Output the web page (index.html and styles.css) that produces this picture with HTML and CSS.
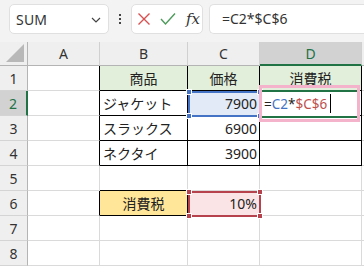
FILE: index.html
```html
<!DOCTYPE html>
<html lang="ja">
<head>
<meta charset="utf-8">
<link rel="stylesheet" href="styles.css">
</head>
<body>
<div class="app">
  <div class="toolbar">
    <div class="namebox">
      <span class="name">SUM</span>
      <svg class="chev" width="10" height="6" viewBox="0 0 10 6"><path d="M1 1 L5 5 L9 1" fill="none" stroke="#444" stroke-width="1.2"/></svg>
    </div>
    <div class="dots"><i></i><i></i><i></i></div>
    <div class="fbtns">
      <svg width="14" height="14" viewBox="0 0 14 14"><path d="M1.5 1.5 L12.5 12.5 M12.5 1.5 L1.5 12.5" stroke="#d8504f" stroke-width="1.4" fill="none"/></svg>
      <svg width="16" height="14" viewBox="0 0 16 14"><path d="M1 7 L5.5 12 L15 1.5" stroke="#4c9a5a" stroke-width="1.4" fill="none"/></svg>
      <span class="fx">fx</span>
    </div>
    <div class="finput">=C2*$C$6</div>
  </div>
  <div class="sheet">
    <div class="hd corner"><svg width="20" height="20" viewBox="0 0 20 20"><path d="M19 1 L19 19 L1 19 Z" fill="#b8b8b8"/></svg></div>
    <div class="hd col">A</div>
    <div class="hd col">B</div>
    <div class="hd col">C</div>
    <div class="hd col sel">D</div>
    <div class="hd col end"></div>

    <div class="hd row">1</div>
    <div class="c tl"></div>
    <div class="c t hdr ctr">商品</div>
    <div class="c t hdr ctr">価格</div>
    <div class="c t hdr ctr">消費税</div>
    <div class="c"></div>

    <div class="hd row rsel">2</div>
    <div class="c tl"></div>
    <div class="c t">ジャケット</div>
    <div class="c t num bluefill">7900</div>
    <div class="c t"></div>
    <div class="c"></div>

    <div class="hd row">3</div>
    <div class="c tl"></div>
    <div class="c t">スラックス</div>
    <div class="c t num">6900</div>
    <div class="c t"></div>
    <div class="c"></div>

    <div class="hd row">4</div>
    <div class="c tl"></div>
    <div class="c t">ネクタイ</div>
    <div class="c t num">3900</div>
    <div class="c t"></div>
    <div class="c"></div>

    <div class="hd row">5</div>
    <div class="c"></div>
    <div class="c tb"></div>
    <div class="c"></div>
    <div class="c"></div>
    <div class="c"></div>

    <div class="hd row">6</div>
    <div class="c tl"></div>
    <div class="c t yel ctr">消費税</div>
    <div class="c num pinkfill">10%</div>
    <div class="c"></div>
    <div class="c"></div>

    <div class="hd row">7</div>
    <div class="c"></div>
    <div class="c"></div>
    <div class="c"></div>
    <div class="c"></div>
    <div class="c"></div>

    <div class="hd row">8</div>
    <div class="c"></div>
    <div class="c"></div>
    <div class="c"></div>
    <div class="c"></div>
    <div class="c"></div>

    <div class="selbox blue">
      <i class="h h1"></i><i class="h h2"></i><i class="h h3"></i><i class="h h4"></i>
    </div>
    <div class="selbox red">
      <i class="h h1"></i><i class="h h2"></i><i class="h h3"></i><i class="h h4"></i>
    </div>
    <div class="editor">
      <div class="editcell"><span class="k">=</span><span class="b">C2</span><span class="k">*</span><span class="r">$C$6</span><span class="caret"></span></div>
    </div>
  </div>
</div>
</body>
</html>
```
FILE: styles.css
```css
* { box-sizing: border-box; }
html, body { margin: 0; padding: 0; }
body {
  width: 364px; height: 266px; overflow: hidden;
  background: #f3f3f3;
  font-family: "Noto Sans", "Noto Sans CJK JP", sans-serif;
  color: #222;
}
.app { width: 364px; height: 266px; overflow: hidden; }
.toolbar {
  height: 42px; display: flex; align-items: flex-start; padding-top: 4px;
  background: #f3f3f3;
}
.namebox {
  margin-left: 9px; width: 100px; height: 30px; background: #fff;
  border: 1px solid #e0e0e0; border-radius: 5px;
  display: flex; align-items: center; justify-content: space-between;
  padding: 0 7px 0 6px;
}
.name { font-size: 14px; color: #333; letter-spacing: 0.2px; }
.chev { margin-top: 1px; }
.dots {
  width: 22px; height: 30px; display: flex; flex-direction: column;
  align-items: center; justify-content: center; gap: 2px;
}
.dots i { width: 2px; height: 2px; background: #444; display: block; }
.fbtns {
  width: 72px; height: 30px; background: #fff; border: 1px solid #e0e0e0;
  border-radius: 5px; display: flex; align-items: center; gap: 9px;
  padding-left: 5px;
}
.fx {
  font-family: "DejaVu Serif", "Liberation Serif", serif; font-style: italic;
  font-size: 15px; color: #333; margin-left: 1px;
}
.finput {
  margin-left: 6px; flex: 1; height: 30px; background: #fff;
  border: 1px solid #e0e0e0; border-right: none; border-radius: 5px 0 0 5px;
  font-size: 14px; color: #333; padding-left: 12px; line-height: 28px;
}
.sheet {
  position: relative;
  display: grid;
  grid-template-columns: 28px 72px 88px 72px 102px 20px;
  grid-template-rows: 24px repeat(8, 25px);
  background: #fff;
}
.hd {
  background: #efefef; color: #333; font-size: 14px;
  display: flex; align-items: center; justify-content: center;
}
.corner { border-right: 1px solid #b4b4b4; border-bottom: 1px solid #b4b4b4; justify-content: flex-end; align-items: flex-end; padding: 0 2px 2px 0; }
.col { border-right: 1px solid #d0d0d0; border-bottom: 1px solid #b4b4b4; }
.col.sel { background: #d2d2d2; color: #217346; border-bottom: 2px solid #217346; }
.col.end { border-right: none; }
.row { border-right: 1px solid #b4b4b4; border-bottom: 1px solid #d4d4d4; }
.row.rsel { background: #d2d2d2; color: #217346; border-right: 2px solid #217346; }
.c {
  border-right: 1px solid #dadada; border-bottom: 1px solid #dadada;
  font-size: 14px; display: flex; align-items: center; padding: 0 3px;
  white-space: nowrap; overflow: hidden; color: #222;
}
.c.tl { border-right-color: #000; }
.c.t { border-right-color: #000; border-bottom-color: #000; }
.c.tb { border-bottom-color: #000; }
.hdr { background: #e2efda; }
.ctr { justify-content: center; }
.num { justify-content: flex-end; font-size: 14px; padding-right: 2px; }
.yel { background: #ffe699; }
.bluefill { background: #e1eaf6; }
.pinkfill { background: #fbe4e5; }
.selbox { position: absolute; pointer-events: none; }
.selbox.blue { left: 188px; top: 49px; width: 73px; height: 26px; border: 2px solid #4472c4; }
.selbox.red { left: 188px; top: 149px; width: 73px; height: 26px; border: 2px solid #b5424c; }
.h { position: absolute; width: 6px; height: 6px; display: block; }
.blue .h { background: #4472c4; border: 1px solid #fff; }
.red .h { background: #b5424c; border: 1px solid #fff; }
.h1 { left: -4px; top: -4px; }
.h2 { right: -4px; top: -4px; }
.h3 { left: -4px; bottom: -4px; }
.h4 { right: -4px; bottom: -4px; }
.editor {
  position: absolute; left: 259px; top: 43px; width: 101px; height: 37px;
  border: 3px solid #f4b3ca; background: transparent;
  display: flex; align-items: center;
}
.editcell {
  width: 100%; height: 28px; background: #fff;
  border-top: 2px solid #217346; border-bottom: 2px solid #217346;
  display: flex; align-items: center; padding-left: 2px;
  font-size: 13.5px; white-space: nowrap;
}
.editcell .k { color: #222; }
.editcell .b { color: #4472c4; }
.editcell .r { color: #c0504d; }
.caret { display: inline-block; width: 1px; height: 19px; background: #000; margin-left: 3px; }
```
